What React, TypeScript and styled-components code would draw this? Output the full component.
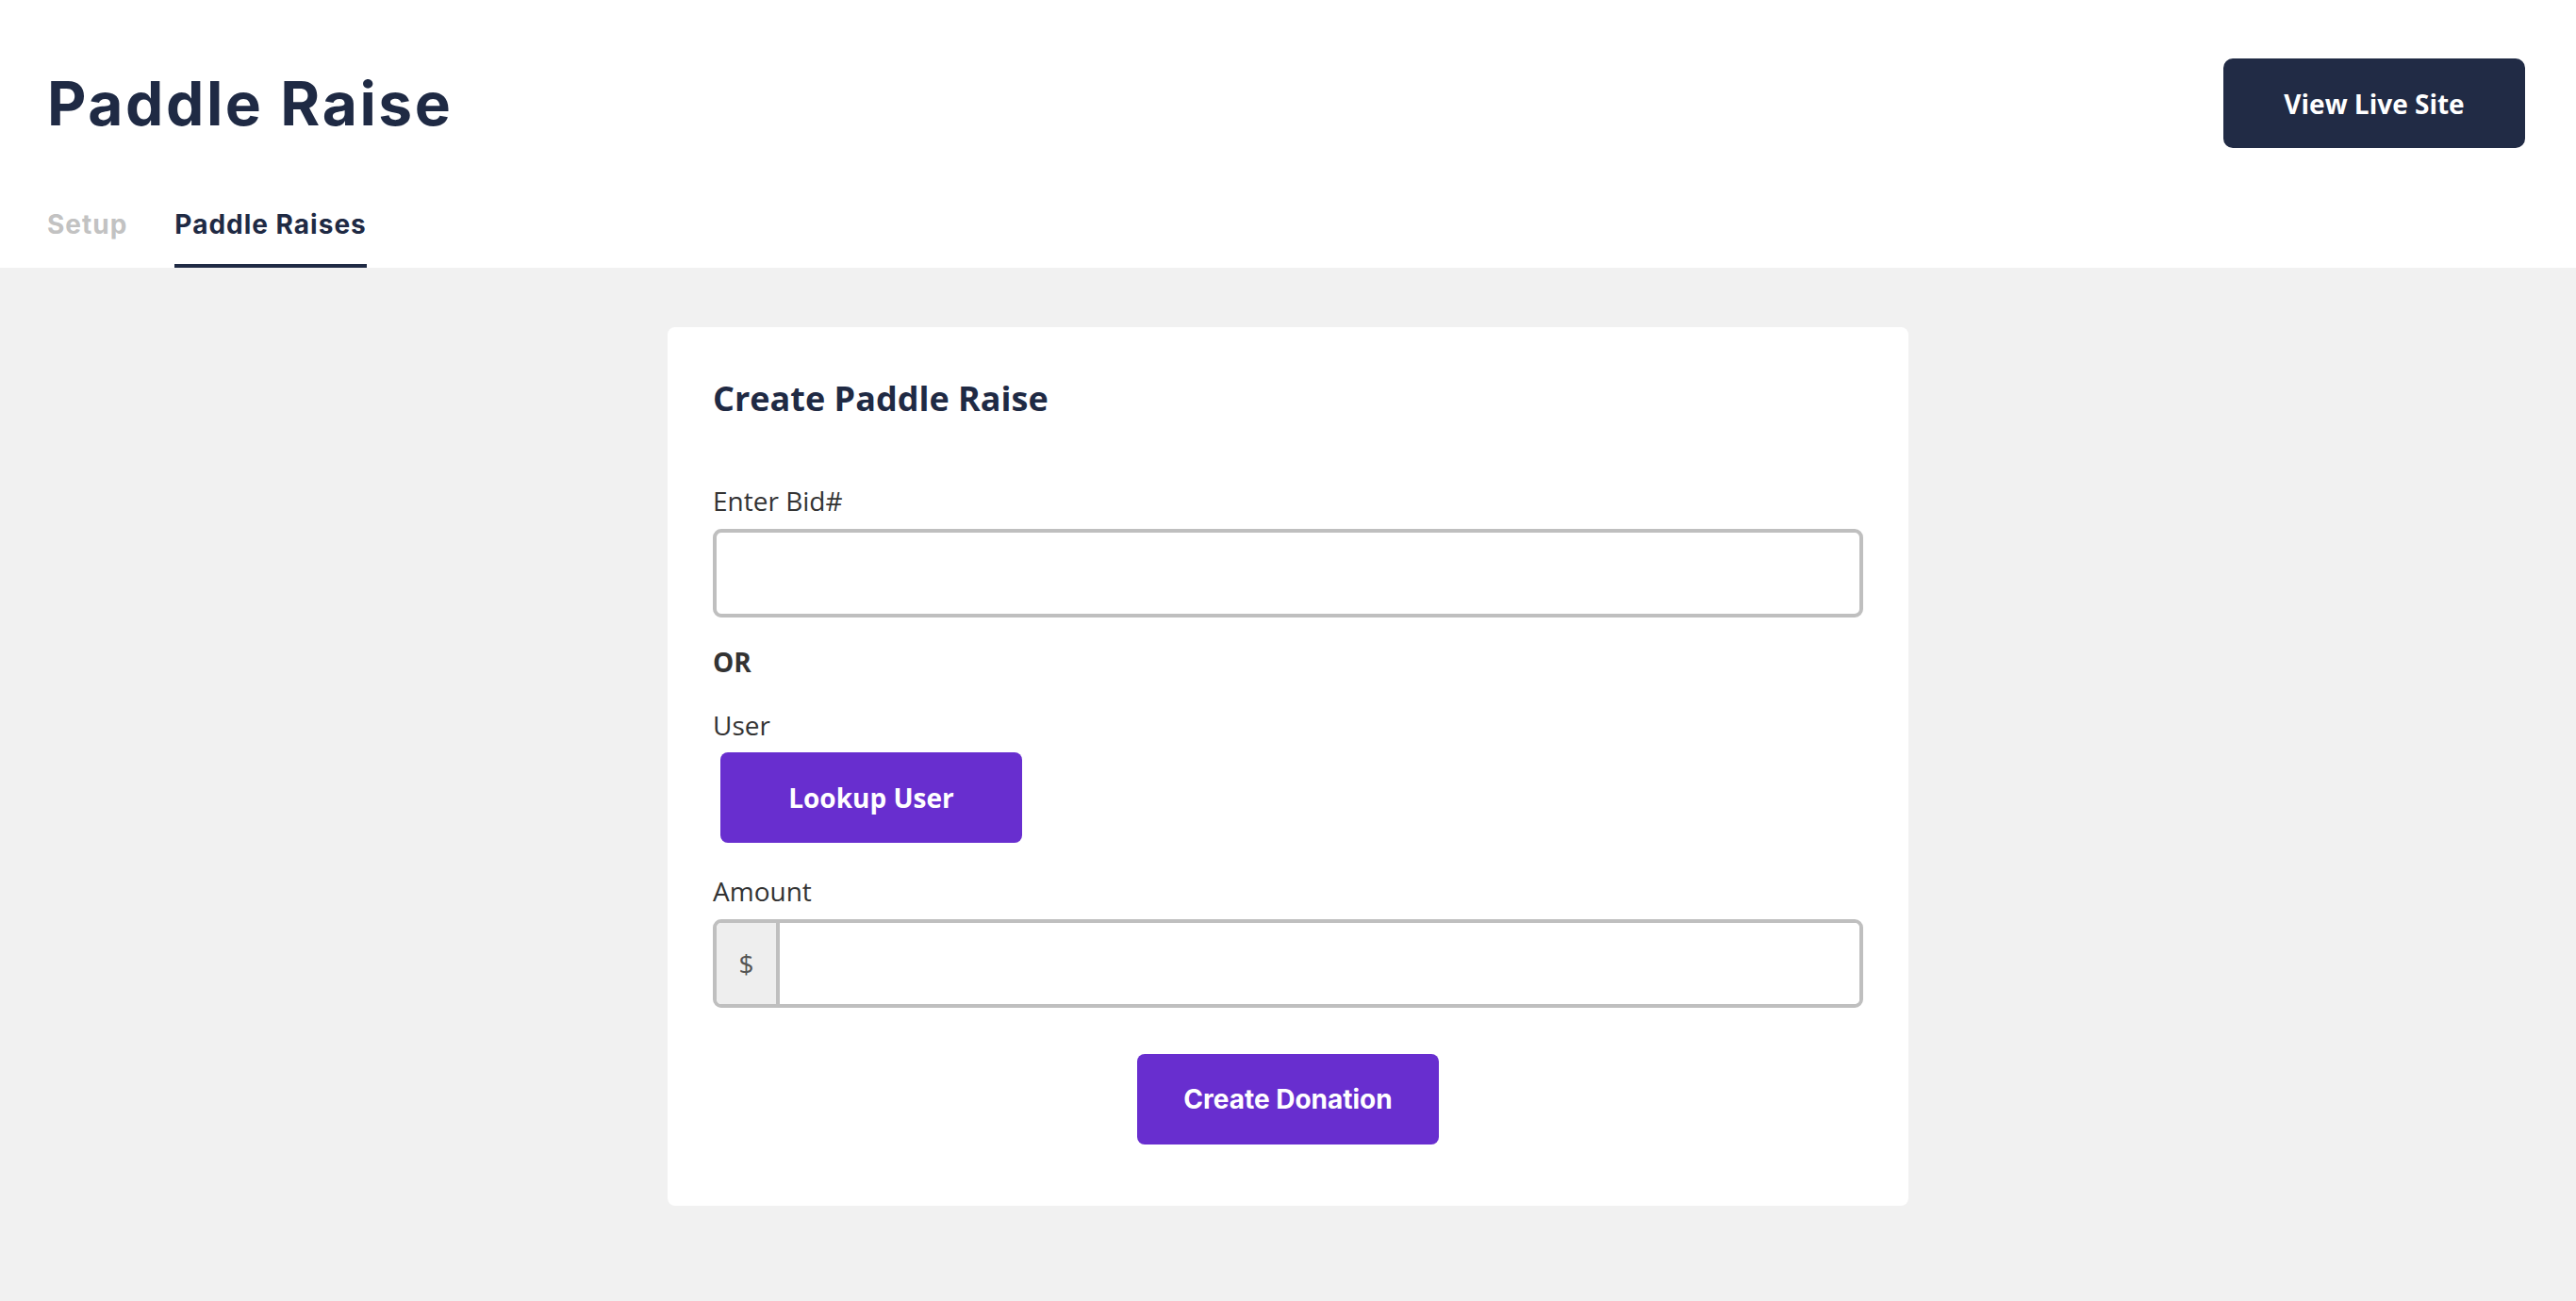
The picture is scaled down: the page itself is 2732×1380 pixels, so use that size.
import styled, { createGlobalStyle } from 'styled-components';

const navy = '#1f2a44';
const purple = '#682ecf';
const line = '#bfbfbf';

const GlobalStyle = createGlobalStyle`
  html, body {
    margin: 0;
    padding: 0;
  }
  body {
    background: #f1f1f1;
    min-height: 100vh;
    font-family: 'Open Sans', 'Noto Sans', sans-serif;
  }
`;

const Header = styled.header`
  background: #fff;
  padding: 62px 54px 0 50px;
`;

const TopRow = styled.div`
  display: flex;
  align-items: center;
  justify-content: space-between;
  height: 95px;
`;

const Title = styled.h1`
  margin: 0;
  font-family: Inter, 'Noto Sans', sans-serif;
  font-size: 64px;
  font-weight: 700;
  letter-spacing: 2.6px;
  line-height: 1;
  color: ${navy};
`;

const DarkButton = styled.button`
  width: 320px;
  height: 95px;
  border: none;
  border-radius: 10px;
  background: #212b45;
  color: #fff;
  font-family: 'Open Sans', sans-serif;
  font-size: 28px;
  font-weight: 700;
  cursor: pointer;
`;

const Tabs = styled.nav`
  display: flex;
  gap: 50px;
  margin-top: 63px;
`;

const Tab = styled.div<{ active?: boolean }>`
  font-family: Inter, 'Noto Sans', sans-serif;
  font-size: 28px;
  font-weight: 700;
  letter-spacing: 1px;
  line-height: 36px;
  padding-bottom: 24px;
  color: ${props => (props.active ? navy : '#c2c2c2')};
  border-bottom: 4px solid ${props => (props.active ? navy : 'transparent')};
  cursor: pointer;
`;

const Main = styled.main`
  display: flex;
  justify-content: center;
  padding: 63px 0 80px;
`;

const Card = styled.section`
  width: 1316px;
  box-sizing: border-box;
  background: #fff;
  border-radius: 8px;
  padding: 48px 48px 65px;
  display: flex;
  flex-direction: column;
`;

const CardTitle = styled.h2`
  margin: 0 0 61px;
  font-size: 36px;
  font-weight: 700;
  line-height: 56px;
  color: ${navy};
`;

const Label = styled.label<{ bold?: boolean; tight?: boolean }>`
  display: block;
  font-size: 28px;
  line-height: 38px;
  font-weight: ${props => (props.bold ? 700 : 400)};
  color: #333;
  margin-bottom: ${props => (props.bold ? '29px' : props.tight ? '0' : '11px')};
`;

const TextInput = styled.input`
  display: block;
  width: 100%;
  height: 94px;
  box-sizing: border-box;
  border: 4px solid ${line};
  border-radius: 9px;
  padding: 0 20px;
  font-family: 'Open Sans', sans-serif;
  font-size: 28px;
  outline: none;
  margin-bottom: 28px;
`;

const InputGroup = styled.div`
  display: flex;
  height: 94px;
  box-sizing: border-box;
  border: 4px solid ${line};
  border-radius: 9px;
  overflow: hidden;
`;

const Prefix = styled.span`
  width: 67px;
  box-sizing: border-box;
  display: flex;
  align-items: center;
  justify-content: center;
  background: #eee;
  border-right: 4px solid ${line};
  font-size: 28px;
  color: #555;
`;

const GroupInput = styled.input`
  flex: 1;
  border: none;
  outline: none;
  padding: 0 20px;
  font-family: 'Open Sans', sans-serif;
  font-size: 28px;
`;

const PurpleButton = styled.button<{ inter?: boolean }>`
  width: 320px;
  height: 96px;
  border: none;
  border-radius: 8px;
  background: ${purple};
  color: #fff;
  font-family: ${props => (props.inter ? "Inter, sans-serif" : "'Open Sans', sans-serif")};
  font-size: 28px;
  font-weight: 700;
  cursor: pointer;
`;

const LookupButton = styled(PurpleButton)`
  margin: 10px 0 32px 8px;
`;

const Actions = styled.div`
  display: flex;
  justify-content: center;
  margin-top: 49px;
`;

export default function App() {
  return (
    <>
      <GlobalStyle />
      <Header>
        <TopRow>
          <Title>Paddle Raise</Title>
          <DarkButton>View Live Site</DarkButton>
        </TopRow>
        <Tabs>
          <Tab>Setup</Tab>
          <Tab active>Paddle Raises</Tab>
        </Tabs>
      </Header>
      <Main>
        <Card>
          <CardTitle>Create Paddle Raise</CardTitle>
          <Label>Enter Bid#</Label>
          <TextInput />
          <Label bold>OR</Label>
          <Label tight>User</Label>
          <LookupButton>Lookup User</LookupButton>
          <Label>Amount</Label>
          <InputGroup>
            <Prefix>$</Prefix>
            <GroupInput />
          </InputGroup>
          <Actions>
            <PurpleButton inter>Create Donation</PurpleButton>
          </Actions>
        </Card>
      </Main>
    </>
  );
}
